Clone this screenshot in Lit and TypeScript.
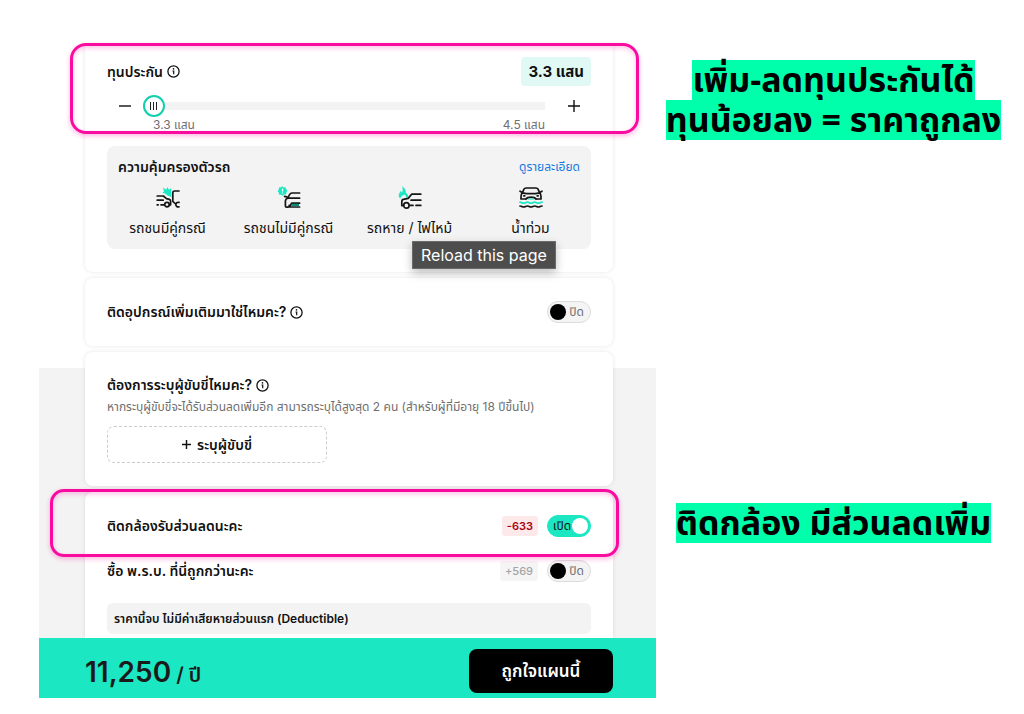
import { LitElement, html, css, svg } from "lit";
import { customElement, property, state } from "lit/decorators.js";

const infoIcon = html`<svg class="info" viewBox="0 0 13 13" width="13" height="13" aria-hidden="true">
  <circle cx="6.5" cy="6.5" r="5.6" fill="none" stroke="#111" stroke-width="1.3" />
  <path d="M5.5 6h1.2v3.2" fill="none" stroke="#111" stroke-width="1.2" />
  <circle cx="6.5" cy="3.9" r=".8" fill="#111" />
</svg>`;

const plusIcon = (size: number, weight: number) => html`<svg viewBox="0 0 12 12" width=${size} height=${size} aria-hidden="true">
  <path d="M6 0v12M0 6h12" fill="none" stroke="#111" stroke-width=${weight} />
</svg>`;

const coverIcons = {
  crash: svg`
    <path d="M7 1.600 10.200 3.800 11.400 1 13 3.800 15.400 2 15 6 15.400 11 12 9.800 9 7.400 6.200 6.600 8 5.400z" fill="#1be7c3" />
    <g fill="none" stroke="#151515" stroke-width="1.700" stroke-linecap="round" stroke-linejoin="round">
      <path d="M1.200 10h6.200l3 2.600 3 .8c.9.300 1.200 1 1.200 2v3.400h-1.200M1.200 14.200h6M1.200 18.800h1M5 18.800h3" />
      <circle cx="11" cy="18.600" r="2.300" />
      <path d="M23 5h-4.400c-1.200 0-1.800.6-1.800 1.800v8.600l2.800 2.600" />
      <path d="M23 16.400c-1.700-.5-3.200.5-3.200 2.200s1.500 2.700 3.200 2.200" />
    </g>`,
  alert: svg`
    <path d="M5.200.2 6.700 1.400 8.600 1.200 9 3.100 10.400 4.600 9.400 6.300 9.200 8.200 7.200 8.500 5.600 9.800 4 8.700 2 8.500 1.700 6.500.6 5 1.800 3.400 2 1.400 3.900 1.300z" fill="#1be7c3" />
    <path d="M5.500 2.400v3M5.500 6.600v1" stroke="#fff" stroke-width="1.200" />
    <g fill="none" stroke="#151515" stroke-width="1.700" stroke-linecap="round" stroke-linejoin="round">
      <path d="M22.600 7h-7.400c-1.800 0-3 1.300-3.800 4.400M7.600 10.400l3.800 1M22.600 12.200H11.400c-1.800 0-3 1.400-3 3v4.800c0 .8.400 1.200 1.200 1.200h1.400c.9 0 1.200-.6 1.200-1.800M22.600 21H12.400l2.200-3.800h8" />
    </g>
    <path d="M15 17.800h7v2.400h-8z" fill="#138a76" />`,
  fire: svg`
    <path d="M2.600 12.600C.8 11.400.4 9.800 1 8c.4-1.200 1.200-1.800 1.600-3 .8.400 1.200 1 1.200 1.800C4.900 5 5 2.800 4 .2 6.600 1.600 8 3.800 7.800 6.400l1.600 1.800c.8.8 1 1.800.8 2.800L8 12c.4-1.600-.4-2.600-1.600-3.600L4.200 9.800C3 10.600 2.600 11.400 2.600 12.600z" fill="#1be7c3" />
    <g fill="none" stroke="#151515" stroke-width="1.700" stroke-linecap="round" stroke-linejoin="round">
      <path d="M22.800 8.200h-9.200L10.200 12.400l-4.800 1C4.300 13.600 3.800 14.600 3.800 16v3.600h1.600M13 14.200h9.800M12 19.400h3M18 19.400h4.800" />
      <circle cx="8.400" cy="19.400" r="2.700" />
    </g>`,
  flood: svg`
    <g fill="none" stroke="#151515" stroke-width="1.700" stroke-linecap="round" stroke-linejoin="round">
      <path d="M3.400 6.600 5 3.200C5.400 2.300 6 2 7 2h10c1 0 1.600.3 2 1.200l1.600 3.400M1 5.200l1.800 1M23 5.200l-1.800 1M3.200 6.800c5.800 1.200 11.800 1.200 17.600 0M3.200 6.800C2.400 8 2 9.200 2 10.600v2.200M20.800 6.800c.8 1.200 1.200 2.400 1.200 3.800v2.200M2 13h4.600M17.400 13H22M4.800 9.800h1M18.200 9.800h1" />
      <path d="M7 13c1.600-2.600 8.400-2.600 10 0" />
      <path d="M1 20c1.800 0 1.800 1 3.700 1s1.800-1 3.700-1 1.800 1 3.600 1 1.800-1 3.700-1 1.800 1 3.600 1 1.900-1 3.700-1" />
    </g>
    <path d="M8.600 13.400c1.400-1.400 5.400-1.400 6.800 0z" fill="#1be7c3" />
    <path d="M1 16.200c1.800 0 1.800 1 3.700 1s1.800-1 3.700-1 1.800 1 3.600 1 1.800-1 3.700-1 1.800 1 3.600 1 1.900-1 3.700-1" fill="none" stroke="#1be7c3" stroke-width="1.700" stroke-linecap="round" />`,
};

@customElement("toggle-switch")
export class ToggleSwitch extends LitElement {
  @property() name = "";
  @property({ type: Boolean }) on = false;

  static styles = css`
    :host {
      display: block;
      flex: none;
    }
    .pill {
      display: flex;
      align-items: center;
      justify-content: space-between;
      box-sizing: border-box;
      width: 44px;
      height: 22px;
      padding: 0 6px 0 2px;
      border: 1px solid #dcdcdc;
      border-radius: 11px;
      background: #f4f4f4;
      color: #6f6f6f;
      font-size: 12px;
      line-height: 20px;
      cursor: pointer;
    }
    .pill.on {
      flex-direction: row-reverse;
      padding: 0 2px 0 5px;
      border-color: #1be7c3;
      background: #1be7c3;
      color: #111;
    }
    .knob {
      appearance: none;
      flex: none;
      width: 16px;
      height: 16px;
      margin: 0;
      border-radius: 50%;
      background: #000;
      cursor: pointer;
    }
    .on .knob {
      background: #fff;
    }
  `;

  render() {
    return html`<label class="pill ${this.on ? "on" : ""}">
      <input
        class="knob"
        type="checkbox"
        aria-label=${this.name}
        .checked=${this.on}
        @change=${(e: Event) => (this.on = (e.target as HTMLInputElement).checked)}
      />
      <span>${this.on ? "เปิด" : "ปิด"}</span>
    </label>`;
  }
}

@customElement("app-root")
export class AppRoot extends LitElement {
  @state() private covers = [
    { icon: coverIcons.crash, text: "รถชนมีคู่กรณี" },
    { icon: coverIcons.alert, text: "รถชนไม่มีคู่กรณี" },
    { icon: coverIcons.fire, text: "รถหาย / ไฟไหม้" },
    { icon: coverIcons.flood, text: "น้ำท่วม" },
  ];

  static styles = css`
    :host {
      display: block;
      min-height: 100vh;
      background: #fff;
      color: #111;
      font-family: Inter, "Noto Sans Thai", "Noto Sans", sans-serif;
      font-size: 14px;
      line-height: 20px;
    }
    button {
      border: 0;
      background: none;
      padding: 0;
      color: inherit;
      font: inherit;
      cursor: pointer;
    }
    svg {
      display: block;
      flex: none;
    }
    .page {
      display: grid;
      grid-template-columns: 617fr 355fr;
      padding: 45px 13px 16px 39px;
    }
    .plan {
      background: linear-gradient(#fff 323px, #f3f3f3 323px);
    }
    .cards {
      display: grid;
      gap: 6px;
      padding: 0 43px 0 46px;
    }
    .card {
      position: relative;
      padding: 23px 22px;
      border-radius: 8px;
      background: #fff;
      box-shadow: 0 0 4px rgba(0, 0, 0, 0.1);
    }
    .card.first {
      padding-top: 12px;
      border-radius: 0 0 8px 8px;
      clip-path: inset(0 -8px -8px -8px);
    }
    .card.last {
      padding-bottom: 4px;
      border-radius: 8px 8px 0 0;
    }
    .block {
      position: relative;
    }
    .mark {
      position: absolute;
      box-sizing: border-box;
      border: 3px solid #fa0ba0;
      border-radius: 16px;
      box-shadow: 0 2px 5px rgba(250, 11, 160, 0.3), inset 0 2px 5px rgba(250, 11, 160, 0.25);
      pointer-events: none;
    }
    .mark.sum {
      inset: -2px -26px auto -15px;
      height: 91px;
    }
    .mark.camera {
      inset: -3px -6px auto -35px;
      height: 68px;
      border-radius: 14px;
    }
    .row {
      display: flex;
      align-items: center;
      justify-content: space-between;
      gap: 10px;
    }
    .second {
      margin-top: 23px;
    }
    .title {
      display: flex;
      align-items: center;
      gap: 4px;
      margin: 0;
      font-size: 14px;
      line-height: 20px;
      font-weight: 600;
    }
    .sum-value {
      padding: 0 7px;
      border-radius: 4px;
      background: #e1f9f4;
      font-size: 15px;
      line-height: 29px;
      font-weight: 700;
    }
    .slider {
      display: grid;
      grid-template-columns: 36px 1fr 46px;
      align-items: center;
      margin-top: 9px;
    }
    .step {
      display: flex;
      justify-content: center;
      height: 22px;
      align-items: center;
    }
    .step.more {
      padding-left: 12px;
    }
    .range {
      appearance: none;
      width: 100%;
      height: 22px;
      margin: 0;
      background: linear-gradient(#f3f3f3, #f3f3f3) center / 100% 8px no-repeat;
      border-radius: 4px;
    }
    .range::-webkit-slider-thumb {
      appearance: none;
      box-sizing: border-box;
      width: 22px;
      height: 22px;
      border: 2px solid #12cfae;
      border-radius: 50%;
      background:
        linear-gradient(#222, #222) 5px 5px / 1px 8px no-repeat,
        linear-gradient(#222, #222) 8px 5px / 1px 8px no-repeat,
        linear-gradient(#222, #222) 11px 5px / 1px 8px no-repeat,
        #fff;
    }
    .limits {
      display: flex;
      justify-content: space-between;
      grid-column: 2;
      padding-left: 10px;
      color: #707070;
      font-size: 12px;
      line-height: 16px;
    }
    .panel {
      margin-top: 13px;
      padding: 11px;
      border-radius: 8px;
      background: #f3f3f3;
    }
    .link {
      color: #1677e0;
      font-size: 12px;
      line-height: 18px;
      text-decoration: none;
    }
    .covers {
      display: grid;
      grid-template-columns: repeat(4, 1fr);
      margin: 9px -11px 0;
      padding: 0;
      list-style: none;
    }
    .cover {
      display: grid;
      justify-items: center;
      gap: 8px;
      white-space: nowrap;
    }
    .tip {
      position: absolute;
      z-index: 2;
      top: 196px;
      left: 327px;
      box-sizing: border-box;
      padding: 0 8px;
      border: 1px solid #6a6a6a;
      background: #4d4d4d;
      box-shadow: 0 4px 10px rgba(0, 0, 0, 0.25);
      color: #fff;
      font-size: 16px;
      line-height: 26px;
      white-space: nowrap;
    }
    .note {
      margin: 1px 0 8px;
      color: #6f6f6f;
      font-size: 12px;
      line-height: 22px;
    }
    .add {
      display: flex;
      align-items: center;
      justify-content: center;
      gap: 6px;
      box-sizing: border-box;
      width: 220px;
      height: 37px;
      border: 1px dashed #ccc;
      border-radius: 7px;
      font-weight: 600;
    }
    .price {
      padding: 0 5px;
      border-radius: 3px;
      background: #f5f5f5;
      color: #a3a3a3;
      font-size: 11px;
      line-height: 20px;
      font-weight: 500;
    }
    .price.off {
      background: #fde8ea;
      color: #a80010;
      font-weight: 600;
    }
    .side {
      display: flex;
      align-items: center;
      gap: 9px;
    }
    .fine {
      margin: 21px 0 0;
      padding: 0 7px;
      border-radius: 6px;
      background: #f3f3f3;
      font-size: 12px;
      line-height: 31px;
      font-weight: 600;
    }
    .footer {
      position: relative;
      display: flex;
      align-items: center;
      justify-content: space-between;
      padding: 11px 43px 5px 46px;
      background: #1be7c3;
    }
    .total {
      margin: 0;
      padding-top: 4px;
      color: #1a1a1a;
      font-size: 20px;
      line-height: 32px;
      font-weight: 600;
    }
    .amount {
      font-size: 28px;
    }
    .buy {
      width: 144px;
      height: 44px;
      border-radius: 8px;
      background: #000;
      color: #fff;
      font-size: 17px;
      font-weight: 600;
    }
    .captions {
      display: flex;
      flex-direction: column;
      align-items: center;
      gap: 363px;
      padding-top: 15px;
      font-family: "Noto Sans Thai", "Noto Sans", sans-serif;
      color: #000;
      font-size: 34px;
      line-height: 36px;
      font-weight: 700;
      text-align: center;
      white-space: nowrap;
    }
    .caption {
      display: grid;
      justify-items: center;
      margin: 0;
    }
    .line {
      padding-top: 4px;
      background: #00ffab;
    }
  `;

  render() {
    return html`<main class="page">
      <section class="plan">
        <div class="cards">
          <div class="block">
            <div class="card first">
              <div class="row">
                <h2 class="title"><label for="sum">ทุนประกัน</label>${infoIcon}</h2>
                <output class="sum-value" for="sum">3.3 แสน</output>
              </div>
              <div class="slider">
                <button class="step" aria-label="ลด">
                  <svg viewBox="0 0 12 12" width="12" height="12" aria-hidden="true"><path d="M0 6h12" stroke="#111" stroke-width="1.400" /></svg>
                </button>
                <input class="range" id="sum" type="range" min="3.3" max="4.5" step="0.1" value="3.3" />
                <button class="step more" aria-label="เพิ่ม">${plusIcon(12, 1.4)}</button>
                <div class="limits"><span>3.3 แสน</span><span>4.5 แสน</span></div>
              </div>
              <div class="panel">
                <div class="row">
                  <h3 class="title">ความคุ้มครองตัวรถ</h3>
                  <a class="link" href="#">ดูรายละเอียด</a>
                </div>
                <ul class="covers">
                  ${this.covers.map(
                    (c) => html`<li class="cover">
                      <svg viewBox="0 0 24 24" width="24" height="24" aria-hidden="true">${c.icon}</svg>
                      <span>${c.text}</span>
                    </li>`
                  )}
                </ul>
              </div>
            </div>
            <div class="tip" role="tooltip">Reload this page</div>
            <div class="mark sum"></div>
          </div>

          <div class="card">
            <div class="row">
              <h2 class="title">ติดอุปกรณ์เพิ่มเติมมาใช่ไหมคะ? ${infoIcon}</h2>
              <toggle-switch name="ติดอุปกรณ์เพิ่มเติม"></toggle-switch>
            </div>
          </div>

          <div class="card">
            <h2 class="title">ต้องการระบุผู้ขับขี่ไหมคะ? ${infoIcon}</h2>
            <p class="note">หากระบุผู้ขับขี่จะได้รับส่วนลดเพิ่มอีก สามารถระบุได้สูงสุด 2 คน (สำหรับผู้ที่มีอายุ 18 ปีขึ้นไป)</p>
            <button class="add">${plusIcon(9, 1.9)} ระบุผู้ขับขี่</button>
          </div>

          <div class="card last">
            <div class="row">
              <h2 class="title">ติดกล้องรับส่วนลดนะคะ</h2>
              <div class="side">
                <span class="price off">-633</span>
                <toggle-switch name="ติดกล้องรับส่วนลด" on></toggle-switch>
              </div>
            </div>
            <div class="row second">
              <h2 class="title">ซื้อ พ.ร.บ. ที่นี่ถูกกว่านะคะ</h2>
              <div class="side">
                <span class="price">+569</span>
                <toggle-switch name="ซื้อ พ.ร.บ."></toggle-switch>
              </div>
            </div>
            <p class="fine">ราคานี้จบ ไม่มีค่าเสียหายส่วนแรก (Deductible)</p>
            <div class="mark camera"></div>
          </div>
        </div>
        <footer class="footer">
          <p class="total"><span class="amount">11,250</span> / ปี</p>
          <button class="buy">ถูกใจแผนนี้</button>
        </footer>
      </section>

      <aside class="captions">
        <p class="caption"><span class="line">เพิ่ม-ลดทุนประกันได้</span><span class="line">ทุนน้อยลง = ราคาถูกลง</span></p>
        <p class="caption"><span class="line">ติดกล้อง มีส่วนลดเพิ่ม</span></p>
      </aside>
    </main>`;
  }
}
